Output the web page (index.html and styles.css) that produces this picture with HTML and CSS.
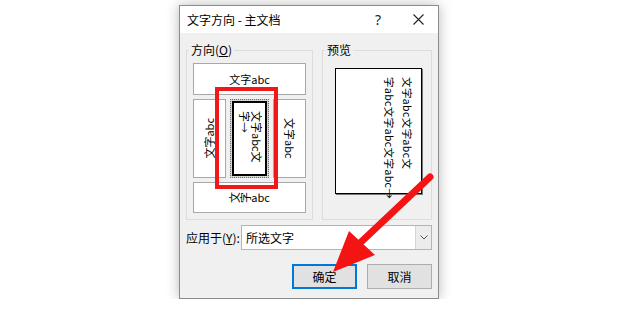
FILE: index.html
```html
<!DOCTYPE html>
<html lang="zh-CN">
<head>
    <meta charset="UTF-8">
    <title>文字方向 - 主文档</title>
    <link rel="stylesheet" href="styles.css">
</head>
<body>
    <div class="dialog">
        <div class="titlebar">
            <span class="title">文字方向 - 主文档</span>
            <span class="tb-btn help">?</span>
            <span class="tb-btn">
                <svg width="11" height="11" viewBox="0 0 11 11"><path d="M0.5 0.5 L10.5 10.5 M10.5 0.5 L0.5 10.5" stroke="#222" stroke-width="1.1" fill="none"/></svg>
            </span>
        </div>

        <div class="content">
            <div class="groups">
                <!-- 方向 -->
                <div class="group">
                    <div class="group-title">方向(<u>O</u>)</div>
                    <div class="opts">
                        <div class="opt opt-h">文字abc</div>
                        <div class="opt-row">
                            <div class="opt opt-v"><span class="v-up">文字abc</span></div>
                            <div class="sel">
                                <div class="sel-inner">文字abc文<br>字→</div>
                            </div>
                            <div class="opt opt-v"><span class="v-down">文字abc</span></div>
                        </div>
                        <div class="opt opt-b"><span class="rot">文</span><span class="rot">字</span>abc</div>
                    </div>
                </div>

                <!-- 预览 -->
                <div class="group">
                    <div class="group-title">预览</div>
                    <div class="preview">
                        <div class="preview-text">文字abc文字abc文<br>字abc文字abc文字abc→</div>
                    </div>
                </div>
            </div>

            <div class="apply">
                <label class="apply-label">应用于(<u>Y</u>):</label>
                <div class="combo">
                    <span class="combo-text">所选文字</span>
                    <span class="combo-btn">
                        <svg width="8" height="5" viewBox="0 0 8 5"><path d="M0.5 0.5 L4 4 L7.5 0.5" stroke="#555" stroke-width="1" fill="none"/></svg>
                    </span>
                </div>
            </div>

            <div class="buttons">
                <button class="btn default">确定</button>
                <button class="btn">取消</button>
            </div>
        </div>
    </div>

    <!-- annotations -->
    <div class="mark"></div>
    <svg class="arrow" width="620" height="309" viewBox="0 0 620 309">
        <line x1="430" y1="177" x2="360" y2="243" stroke="#f41414" stroke-width="7" stroke-linecap="round"/>
        <polygon points="333,272 349,231 375,255" fill="#f41414"/>
    </svg>
</body>
</html>
```

FILE: styles.css
```css
body {
    margin: 0;
    padding: 5px 0 0 179px;
    background: #fff;
    font-family: "Noto Sans CJK SC", "Microsoft YaHei", sans-serif;
    font-size: 12px;
    color: #000;
}
.dialog {
    width: 258px;
    height: 292px;
    border: 1px solid #8c8c8c;
    background: #f0f0f0;
    box-shadow: 0 0 12px rgba(0,0,0,0.28);
}
.titlebar {
    height: 27px;
    background: #fff;
    display: flex;
    align-items: center;
    padding-left: 7px;
    line-height: 16px;
}
.title {
    flex: 1;
}
.tb-btn {
    width: 40px;
    display: flex;
    justify-content: center;
    align-items: center;
}
.help {
    font-size: 14px;
    font-family: "Noto Sans", sans-serif;
    color: #222;
}
.content {
    padding: 17px 6px 0;
}
.groups {
    display: grid;
    grid-template-columns: 127px 110px;
    gap: 9px;
}
.group {
    border: 1px solid #dcdcdc;
    padding: 0 6px 6px;
}
.group-title {
    width: max-content;
    margin: -9px 0 0 -4px;
    padding: 0 2px;
    background: #f0f0f0;
    line-height: 16px;
}
.opts {
    margin-top: 5px;
    display: flex;
    flex-direction: column;
    gap: 4px;
}
.opt {
    box-sizing: border-box;
    background: #fff;
    border: 1px solid #a8a8a8;
    display: flex;
    align-items: center;
    justify-content: center;
    font-size: 11px;
    line-height: 13px;
    overflow: hidden;
}
.opt-h {
    height: 32px;
}
.opt-b {
    height: 31px;
}
.opt-row {
    display: grid;
    grid-template-columns: 33px 39px 33px;
    grid-template-rows: 79px;
    gap: 4px;
    height: 79px;
}
.opt-v {
    height: 79px;
}
.v-down {
    writing-mode: vertical-rl;
    text-orientation: sideways;
    white-space: nowrap;
}
.v-up {
    writing-mode: vertical-rl;
    text-orientation: sideways;
    white-space: nowrap;
    transform: rotate(180deg);
}
.rot {
    display: inline-block;
    transform: rotate(-90deg);
}
.sel {
    box-sizing: border-box;
    height: 79px;
    border: 1px dotted #6a6a6a;
    background: #d6d6d6;
    padding: 1px;
    overflow: hidden;
}
.sel-inner {
    box-sizing: border-box;
    width: 35px;
    height: 75px;
    border: 2px solid #000;
    background: #fff;
    writing-mode: vertical-rl;
    text-orientation: sideways;
    font-size: 11px;
    line-height: 12px;
    padding: 8px 2px 0 0;
    white-space: nowrap;
}
.preview {
    box-sizing: border-box;
    width: 87px;
    height: 126px;
    margin: 10px 0 0 6px;
    background: #fff;
    border: 1px solid #000;
    box-shadow: 1px 1px 0 #777;
}
.preview-text {
    box-sizing: border-box;
    width: 85px;
    height: 124px;
    writing-mode: vertical-rl;
    text-orientation: sideways;
    font-size: 10.5px;
    letter-spacing: 0.4px;
    line-height: 18px;
    padding: 8px 5px 0 0;
    white-space: nowrap;
}
.apply {
    margin-top: 5px;
    display: flex;
    align-items: center;
    height: 25px;
}
.apply-label {
    width: 55px;
    flex: none;
}
.combo {
    flex: 1;
    height: 25px;
    box-sizing: border-box;
    border: 1px solid #b4b4b4;
    background: #fff;
    display: flex;
    align-items: center;
}
.combo-text {
    flex: 1;
    padding-left: 4px;
}
.combo-btn {
    width: 15px;
    height: 100%;
    border-left: 1px solid #d4d4d4;
    background: #ececec;
    display: flex;
    align-items: center;
    justify-content: center;
}
.buttons {
    margin-top: 14px;
    display: flex;
    justify-content: flex-end;
    gap: 10px;
}
.btn {
    width: 65px;
    height: 25px;
    background: #e1e1e1;
    border: 1px solid #adadad;
    font-family: inherit;
    font-size: 12px;
    color: #000;
    padding: 0;
}
.btn.default {
    border: 2px solid #0078d7;
}
.mark {
    position: absolute;
    left: 215px;
    top: 87px;
    width: 63px;
    height: 102px;
    box-sizing: border-box;
    border: 4px solid #f01818;
}
.arrow {
    position: absolute;
    left: 0;
    top: 0;
    pointer-events: none;
}
```
